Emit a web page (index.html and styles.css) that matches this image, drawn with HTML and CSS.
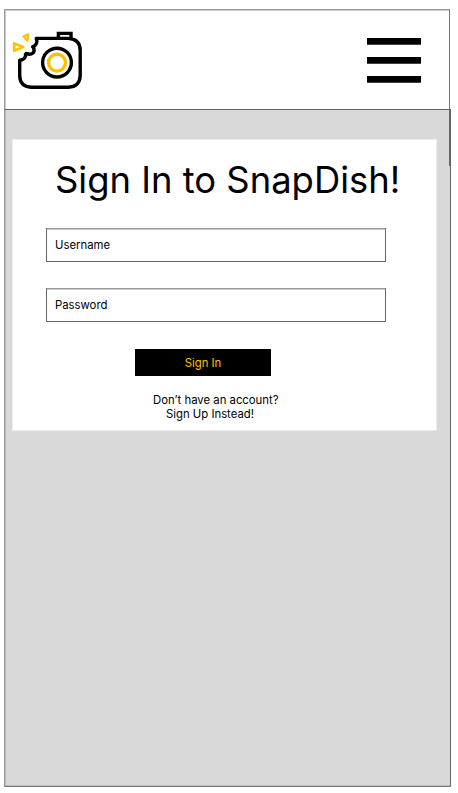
FILE: index.html
```html
<!DOCTYPE html>
<html lang="en">
<head>
<meta charset="utf-8">
<title>SnapDish</title>
<link rel="stylesheet" href="styles.css">
</head>
<body>
<div class="screen">
  <header class="header">
    <svg class="logo" width="76" height="64" viewBox="10 28 76 64" fill="none" stroke-width="3.4" stroke-linejoin="round" stroke-linecap="round" aria-hidden="true">
      <g stroke="#000">
        <path d="M36.2 38.4H68.5Q80.2 39.2 80.2 50.5V75.5Q79.8 86.9 68.5 87.2H31Q20 86.8 19.7 75.5V60.2C22.6 60 24.8 58.4 25.6 56C25 54.4 25.8 53.4 27 53.6C30 55 34.4 53.6 34 50.2Q34 48 32.6 46.8C36.2 45.6 38 42 36.2 38.4Z"/>
        <path d="M58.4 38.4V33.4H71V38.4" stroke-linejoin="miter" stroke-linecap="butt"/>
        <circle cx="57" cy="62.6" r="14.4"/>
      </g>
      <g stroke="#ffc000">
        <circle cx="57" cy="62.6" r="8.5"/>
        <path d="M14.2 43.5V50.7L23.2 47.1Z" stroke-width="2.7"/>
        <path d="M23.4 36.5L28.2 34.3L27.5 40.9Z" stroke-width="2.1"/>
      </g>
    </svg>
    <div class="menu"><span></span><span></span><span></span></div>
  </header>
  <main class="body">
    <form class="card">
      <h1>Sign In to SnapDish!</h1>
      <div class="field">Username</div>
      <div class="field">Password</div>
      <div class="button">Sign In</div>
      <p class="signup">Don’t have an account?<span>Sign Up Instead!</span></p>
    </form>
  </main>
</div>
</body>
</html>
```
FILE: styles.css
```css
* { box-sizing: border-box; }
body { margin: 0; background: #fff; color: #000; font-family: Inter, sans-serif; }
.screen { width: 447px; margin: 9px 0 0 4px; }
.header {
  display: flex;
  justify-content: space-between;
  width: 446px;
  height: 100px;
  padding: 18px 28px 0 5px;
  border: 1px solid #999;
  border-right-color: #777;
  border-bottom: 0;
  box-shadow: inset 1px 1px #ccc;
}
.logo { display: block; }
.menu { display: flex; flex-direction: column; gap: 12px; padding-top: 10px; }
.menu span { width: 54px; height: 7px; background: #000; border: solid #444; border-width: 0 0 1px; }
.body {
  position: relative;
  height: 678px;
  padding: 29px 0 0 7px;
  background: #d9d9d9;
  border: 1px solid #666;
  border-left-color: #999;
  border-bottom-color: #777;
  box-shadow: inset 1px -1px #bbb;
}
.body::after {
  content: "";
  position: absolute;
  top: 0;
  right: 0;
  width: 1px;
  height: 56px;
  background: #666;
}
.card { width: 425px; height: 292px; background: #fff; border: 1px solid #ececec; }
h1 {
  margin: 15px 0 0 42px;
  height: 50px;
  font-size: 36.4px;
  line-height: 50px;
  font-weight: 400;
  white-space: nowrap;
}
.field {
  width: 340px;
  height: 34px;
  margin: 23px 0 0 33px;
  padding-left: 8px;
  border: 1px solid #666;
  border-top-color: #999;
  box-shadow: inset 0 1px #ccc;
  font-size: 11.33px;
  line-height: 33px;
}
.field + .field { margin-top: 26px; }
.button {
  width: 136px;
  height: 27px;
  margin: 27px 0 0 122px;
  background: #000;
  color: #ffc000;
  font-size: 11.33px;
  line-height: 28px;
  text-align: center;
}
.signup { margin: 17px 0 0 140px; font-size: 11.33px; line-height: 14px; white-space: nowrap; }
.signup span { display: block; margin-left: 13px; }
```
